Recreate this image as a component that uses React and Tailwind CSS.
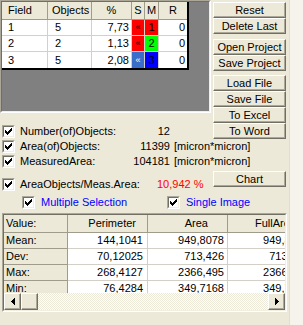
import React from 'react'

const gridRows = [
  { f: '1', o: '5', p: '7,73', s: 'bg-[#FF0000] text-black', m: 'bg-[#FF0000]', n: '1' },
  { f: '2', o: '2', p: '1,13', s: 'bg-[#FF0000] text-black', m: 'bg-[#00FF00]', n: '2' },
  { f: '3', o: '5', p: '2,08', s: 'bg-[#3A6EC8] text-white', m: 'bg-[#0000FF]', n: '3' },
]

const stats = [
  ['Mean:', '144,1041', '949,8078', '949,8078'],
  ['Dev:', '70,12025', '713,426', '713,426'],
  ['Max:', '268,4127', '2366,495', '2366,495'],
  ['Min:', '76,4284', '349,7168', '349,7168'],
]

function Check({ className = '' }) {
  return (
    <span className={`inline-block w-[13px] h-[13px] shrink-0 border border-t-[#ACA899] border-l-[#ACA899] border-b-white border-r-white ${className}`}>
      <span className="block w-full h-full bg-white border border-t-[#716F64] border-l-[#716F64] border-b-[#F1EFE2] border-r-[#F1EFE2]">
        <svg width="9" height="9" viewBox="0 0 9 9" className="block" shapeRendering="crispEdges">
          {[2, 3, 4, 3, 2, 1, 0].map((y, x) => (
            <rect key={x} x={x + 1} y={y + 1} width="1" height="3" fill="#000" />
          ))}
        </svg>
      </span>
    </span>
  )
}

function Btn({ label, className = '' }) {
  return (
    <div className={`w-[73px] h-[16px] flex items-center justify-center bg-[#ECE9D8] border border-t-white border-l-white border-r-[#716F64] border-b-[#716F64] shadow-[inset_-1px_-1px_0_#ACA899] ${className}`}>
      {label}
    </div>
  )
}

function Arrow({ dir }) {
  return (
    <div className="w-[17px] h-[17px] flex items-center justify-center bg-[#ECE9D8] border border-t-white border-l-white border-r-[#716F64] border-b-[#716F64] shadow-[inset_-1px_-1px_0_#ACA899]">
      <svg width="4" height="7" viewBox="0 0 4 7" shapeRendering="crispEdges">
        {dir === 'left'
          ? <polygon points="4,0 4,7 0,3.5" fill="#000" />
          : <polygon points="0,0 0,7 4,3.5" fill="#000" />}
      </svg>
    </div>
  )
}

function Sunken({ className = '', children }) {
  return (
    <div className={`border border-t-[#ACA899] border-l-[#ACA899] border-b-white border-r-white ${className}`}>
      <div className="w-full h-full border border-t-[#716F64] border-l-[#716F64] border-b-[#F1EFE2] border-r-[#F1EFE2] overflow-hidden">
        {children}
      </div>
    </div>
  )
}

export default function App() {
  return (
    <div className="w-[303px] h-[325px] flex bg-[#ECE9D8] text-black text-[11px] leading-none font-['Liberation_Sans',Arial,sans-serif] overflow-hidden">
      <div className="w-[289px] flex flex-col">
        {/* top: field grid + buttons */}
        <div className="flex items-start">
          <div className="w-[211px] flex flex-col">
            <Sunken className="w-[211px] h-[113px]">
              <div className="h-full bg-[#808080]">
                <div className="w-fit border-r-2 border-b-2 border-black bg-white">
                  <div className="flex h-[18px] bg-[#ECE9D8]">
                    <div className="w-[46px] flex items-center pl-[6px] border-r border-b border-[#A09C8C]">Field</div>
                    <div className="w-[44px] flex items-center pl-[4px] border-r border-b border-[#A09C8C]">Objects</div>
                    <div className="w-[40px] flex items-center justify-center border-r border-b border-[#A09C8C]">%</div>
                    <div className="w-[13px] flex items-center justify-center border-r border-b border-[#A09C8C]">S</div>
                    <div className="w-[14px] flex items-center justify-center border-r border-b border-[#A09C8C]">M</div>
                    <div className="w-[28px] flex items-center justify-center border-b border-[#A09C8C]">R</div>
                  </div>
                  {gridRows.map((r, i) => (
                    <div key={r.f} className="flex h-[16px]">
                      <div className={`w-[46px] flex items-center pl-[6px] border-r border-[#D4D0C8] ${i < 2 ? 'border-b' : ''}`}>{r.f}</div>
                      <div className={`w-[44px] flex items-center pl-[7px] border-r border-[#D4D0C8] ${i < 2 ? 'border-b' : ''}`}>{r.o}</div>
                      <div className={`w-[40px] flex items-center justify-end pr-[2px] border-r border-[#D4D0C8] ${i < 2 ? 'border-b' : ''}`}>{r.p}</div>
                      <div className={`w-[13px] flex items-center justify-center text-[9px] border-r border-[#D4D0C8] ${r.s} ${i < 2 ? 'border-b' : ''}`}>«</div>
                      <div className={`w-[14px] flex items-center justify-center border-r border-[#D4D0C8] ${r.m} ${i < 2 ? 'border-b' : ''}`}>{r.n}</div>
                      <div className={`w-[28px] flex items-center justify-end pr-[2px] border-[#D4D0C8] ${i < 2 ? 'border-b' : ''}`}>0</div>
                    </div>
                  ))}
                </div>
              </div>
            </Sunken>
            <div className="mt-[10px] h-[16px] flex items-center">
              <Check className="ml-[2px]" />
              <span className="ml-[5px] w-[110px]">Number(of)Objects:</span>
              <span className="w-[40px] text-right">12</span>
            </div>
          </div>
          <div className="ml-[2px] pt-[2px] flex flex-col">
            <Btn label="Reset" />
            <Btn label="Delete Last" />
            <Btn label="Open Project" className="mt-[5px]" />
            <Btn label="Save Project" />
            <Btn label="Load File" className="mt-[4px]" />
            <Btn label="Save File" />
            <Btn label="To Excel" />
            <Btn label="To Word" />
          </div>
        </div>

        {/* measurement rows */}
        <div className="h-[15px] flex items-center">
          <Check className="ml-[2px]" />
          <span className="ml-[5px] w-[110px]">Area(of)Objects:</span>
          <span className="w-[40px] text-right">11399</span>
          <span className="ml-[4px]">[micron*micron]</span>
        </div>
        <div className="h-[15px] flex items-center">
          <Check className="ml-[2px]" />
          <span className="ml-[5px] w-[110px]">MeasuredArea:</span>
          <span className="w-[40px] text-right">104181</span>
          <span className="ml-[4px]">[micron*micron]</span>
        </div>
        <div className="flex items-start">
          <div className="mt-[7px] h-[16px] w-[213px] flex items-center">
            <Check className="ml-[2px]" />
            <span className="ml-[5px] w-[137px]">AreaObjects/Meas.Area:</span>
            <span className="text-[#FF0000]">10,942 %</span>
          </div>
          <Btn label="Chart" className="mt-[2px]" />
        </div>
        <div className="mt-[2px] h-[16px] flex items-center text-[#0000FF]">
          <Check className="ml-[22px]" />
          <span className="ml-[6px] w-[126px]">Multiple Selection</span>
          <Check />
          <span className="ml-[6px]">Single Image</span>
        </div>

        {/* statistics grid */}
        <Sunken className="mt-[3px] ml-[2px] w-[285px] h-[99px]">
          <div className="h-full flex flex-col">
            <div className="flex-1 overflow-hidden bg-[#808080]">
              <div className="w-max bg-white">
                <div className="flex h-[18px] bg-[#ECE9D8]">
                  <div className="w-[64px] flex items-center pl-[2px] border-r border-b border-[#A09C8C]">Value:</div>
                  <div className="w-[80px] flex items-center justify-end pr-[11px] border-r border-b border-[#A09C8C]">Perimeter</div>
                  <div className="w-[80px] flex items-center justify-end pr-[19px] border-r border-b border-[#A09C8C]">Area</div>
                  <div className="w-[84px] flex items-center justify-end pr-[16px] border-b border-[#A09C8C]">FullArea</div>
                </div>
                {stats.map(r => (
                  <div key={r[0]} className="flex h-[16px]">
                    <div className="w-[64px] flex items-center pl-[2px] bg-[#ECE9D8] border-r border-b border-[#A09C8C]">{r[0]}</div>
                    <div className="w-[80px] flex items-center justify-end pr-[4px] border-r border-b border-[#D4D0C8]">{r[1]}</div>
                    <div className="w-[80px] flex items-center justify-end pr-[3px] border-r border-b border-[#D4D0C8]">{r[2]}</div>
                    <div className="w-[84px] flex items-center justify-end pr-[3px] border-b border-[#D4D0C8]">{r[3]}</div>
                  </div>
                ))}
              </div>
            </div>
            <div className="h-[17px] flex bg-[repeating-conic-gradient(#ECE9D8_0_25%,#ffffff_0_50%)] bg-[length:2px_2px]">
              <Arrow dir="left" />
              <div className="w-[17px] h-[17px] bg-[#ECE9D8] border border-t-white border-l-white border-r-[#716F64] border-b-[#716F64] shadow-[inset_-1px_-1px_0_#ACA899]" />
              <div className="flex-1" />
              <Arrow dir="right" />
            </div>
          </div>
        </Sunken>
      </div>
      <div className="flex-1 bg-[#F6F2EC] border-l border-[#E2DDD0]" />
    </div>
  )
}
